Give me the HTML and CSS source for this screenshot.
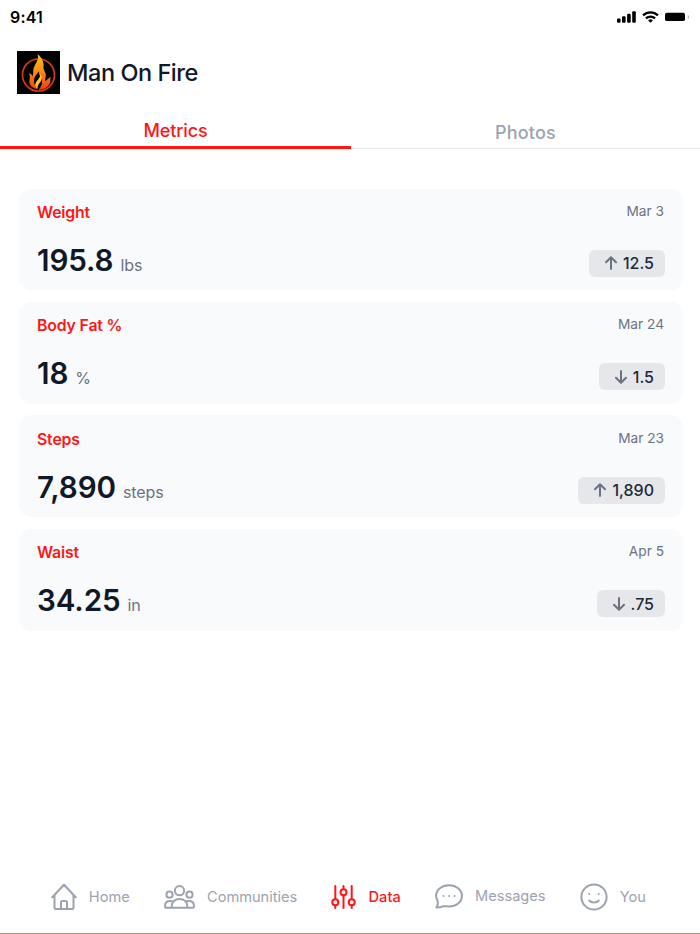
FILE: index.html
```html
<!DOCTYPE html>
<html lang="en">

<head>
  <meta charset="UTF-8" />
  <meta name="viewport" content="width=device-width, initial-scale=1.0" />
  <title>Man On Fire</title>
  <link rel="stylesheet" href="styles.css">
</head>

<body>
  <div class="status-bar">
    <span class="time">9:41</span>
    <div class="status-icons">
      <svg width="19" height="12" viewBox="0 0 19 12">
        <rect x="0" y="7.5" width="3.6" height="4.2" rx="1" />
        <rect x="5" y="5.3" width="3.6" height="6.4" rx="1" />
        <rect x="10.1" y="2.8" width="3.6" height="8.9" rx="1" />
        <rect x="15.2" y="0.2" width="3.6" height="11.5" rx="1" />
      </svg>
      <svg width="17" height="12" viewBox="0 0 17 12" fill="none" stroke="#000" stroke-width="2.2">
        <path d="M1 4.4a10.8 10.8 0 0 1 15 0" />
        <path d="M3.9 7.4a6.7 6.7 0 0 1 9.2 0" />
        <path d="M8.5 11.8 6.1 9.5a3.5 3.5 0 0 1 4.8 0z" fill="#000" stroke="none" />
      </svg>
      <svg width="24" height="10" viewBox="0 0 24 10">
        <rect x="0" y="0.7" width="20" height="8.4" rx="1.8" />
        <path d="M22.800 3v4c.8-.4 1.100-1.200 1.100-2s-.3-1.600-1.100-2z" fill="#aaa" />
      </svg>
    </div>
  </div>

  <header class="header">
    <svg class="logo" viewBox="0 0 43 43">
      <defs>
        <linearGradient id="flame" x1="0" y1="0" x2="0" y2="1">
          <stop offset="0" stop-color="#ffc21a" />
          <stop offset="0.5" stop-color="#fb8a16" />
          <stop offset="1" stop-color="#ee3c12" />
        </linearGradient>
      </defs>
      <rect width="43" height="43" />
      <circle cx="21.500" cy="24" r="16" fill="none" stroke="#d93a16" stroke-width="1.700" />
      <path fill="url(#flame)" d="M20.500 3c5 4 6.500 9 6 13-.4 3 2.500 5 2.300 9-.1 2-.8 3-.8 5 2-.5 2.500-2.500 6-4-1.500 3 .5 5-2.500 8.500-2.500 3-6 4-10 4.500 4-5 4.500-8 2.500-12-1.500-3-2.500-4-1.800-7-3 4-5.700 6.500-5.200 10.500.3 3 1.500 5 3 7.500-5-1-8.500-4.500-7.500-9 .4-2 .8-4-.5-6.500 2 .3 3.200 1.200 3.700 3 1.200-4.500-.5-6.500 2.300-11.500 2-3.500 4-6 2.500-11z" />
      <path fill="#ffc629" d="M23.500 23c3 6-.5 8-2 10.500-.8 1.500-1 2.500-.8 4.500-3-2-3-4.500-1.500-7 1.500-2.500 4-4 4.300-8z" />
    </svg>
    <h1>Man On Fire</h1>
  </header>

  <nav class="tabs">
    <a class="tab active">Metrics</a>
    <a class="tab">Photos</a>
  </nav>

  <main class="metrics">
    <section class="card">
      <div class="row">
        <h2>Weight</h2>
        <span class="date">Mar 3</span>
      </div>
      <div class="row">
        <p class="value">195.8<span class="unit">lbs</span></p>
        <div class="change"><svg class="arrow" viewBox="0 0 12 14"><path d="M6 13V1.500M1 6.300l5-5 5 5" /></svg>12.5</div>
      </div>
    </section>
    <section class="card">
      <div class="row">
        <h2>Body Fat %</h2>
        <span class="date">Mar 24</span>
      </div>
      <div class="row">
        <p class="value">18<span class="unit">%</span></p>
        <div class="change"><svg class="arrow" viewBox="0 0 12 14"><path d="M6 1v11.500M1 7.700l5 5 5-5" /></svg>1.5</div>
      </div>
    </section>
    <section class="card">
      <div class="row">
        <h2>Steps</h2>
        <span class="date">Mar 23</span>
      </div>
      <div class="row">
        <p class="value">7,890<span class="unit">steps</span></p>
        <div class="change"><svg class="arrow" viewBox="0 0 12 14"><path d="M6 13V1.500M1 6.300l5-5 5 5" /></svg>1,890</div>
      </div>
    </section>
    <section class="card">
      <div class="row">
        <h2>Waist</h2>
        <span class="date">Apr 5</span>
      </div>
      <div class="row">
        <p class="value">34.25<span class="unit">in</span></p>
        <div class="change"><svg class="arrow" viewBox="0 0 12 14"><path d="M6 1v11.500M1 7.700l5 5 5-5" /></svg>.75</div>
      </div>
    </section>
  </main>

  <nav class="bottom-nav">
    <a class="nav-item home">
      <svg width="26" height="28" viewBox="0 0 26 28">
        <path d="M1.300 14.300 13 1.800l11.700 12.500M3.500 12.500v12.300c0 .8.500 1.300 1.300 1.300h16.400c.8 0 1.300-.5 1.300-1.300V12.500M10 26v-6.500c0-1 .6-1.600 1.600-1.600h2.800c1 0 1.600.6 1.600 1.600V26" />
      </svg>
      <span>Home</span>
    </a>
    <a class="nav-item communities">
      <svg width="31" height="24" viewBox="0 0 31 24">
        <circle cx="15.500" cy="5.700" r="4.600" />
        <circle cx="5.500" cy="9.700" r="3.100" />
        <circle cx="25.500" cy="9.700" r="3.100" />
        <path d="M7.700 22.800v-1.500c0-4.500 3.200-7.300 7.800-7.300s7.800 2.800 7.800 7.300v1.500M9.500 16.700c-1-.5-2.200-.7-3.500-.7-3 0-4.900 1.700-4.900 4.500v1.300c0 .7.300 1 1 1h26.800c.7 0 1-.3 1-1v-1.300c0-2.800-1.900-4.500-4.900-4.500-1.300 0-2.500.2-3.500.7" />
      </svg>
      <span>Communities</span>
    </a>
    <a class="nav-item data active">
      <svg width="25" height="24" viewBox="0 0 25 24">
        <path d="M4.300 1v13M4.300 20.500V23M12.500 1v3M12.500 10.500V23M20.700 1v13M20.700 20.500V23" />
        <circle cx="4.300" cy="17.200" r="3" />
        <circle cx="12.500" cy="7.200" r="3" />
        <circle cx="20.700" cy="17.200" r="3" />
      </svg>
      <span>Data</span>
    </a>
    <a class="nav-item messages">
      <svg width="28" height="25" viewBox="0 0 28 25">
        <path d="M2.800 17.200C1.700 15.600 1.100 13.900 1.100 12 1.100 6 6.800 1.200 14 1.200S26.900 6 26.900 12 21.200 22.400 14 22.400c-2 0-3.900-.3-5.600-.2-2 .9-4.300 1.500-7 1.400 1.200-1.700 1.800-4.300 1.400-6.400z" />
        <path class="dots" d="M8.500 12h.01M14 12h.01M19.500 12h.01" />
      </svg>
      <span>Messages</span>
    </a>
    <a class="nav-item you">
      <svg width="28" height="28" viewBox="0 0 28 28">
        <circle cx="14" cy="14" r="12.600" />
        <path d="M9.200 17.500c2.300 2.700 7.300 2.700 9.600 0" />
        <path class="dots" d="M9.300 11h.01M18.700 11h.01" />
      </svg>
      <span>You</span>
    </a>
  </nav>
</body>

</html>
```
FILE: styles.css
```css
* {
  box-sizing: border-box;
}

body {
  font-family: Inter, sans-serif;
  height: 934px;
  margin: 0;
  background: #fff;
  color: #111827;
  display: flex;
  flex-direction: column;
  border-bottom: 1px solid #f87171;
}

h1,
h2,
p {
  margin: 0;
}

svg {
  display: block;
  flex: none;
}

.status-bar {
  height: 34px;
  padding: 0 11px 0 10px;
  display: flex;
  align-items: center;
  justify-content: space-between;
  color: #000;
}

.time {
  font-size: 16px;
  font-weight: 600;
  letter-spacing: .2px;
}

.status-icons {
  display: flex;
  align-items: center;
  gap: 6px;
}

.header {
  height: 78px;
  padding: 17px 17px 0;
  display: flex;
  gap: 7px;
}

.logo {
  width: 43px;
  height: 43px;
}

h1 {
  font-size: 23.5px;
  font-weight: 450;
  line-height: 43px;
  letter-spacing: -.45px;
}

.tabs {
  height: 37px;
  display: flex;
  border-bottom: 1px solid #e5e7eb;
}

.tab {
  width: 349px;
  height: 37px;
  padding-top: 3px;
  text-align: center;
  font-size: 18px;
  font-weight: 450;
  line-height: 36px;
  letter-spacing: .2px;
  color: #9ca3af;
}

.tab.active {
  width: 351px;
  padding-top: 1px;
  letter-spacing: -.1px;
  color: #ff1616;
  border-bottom: 3px solid #ff1616;
}

.metrics {
  padding: 39.700px 17px 0 19px;
  display: flex;
  flex-direction: column;
  gap: 11.700px;
}

.card {
  height: 101.700px;
  padding: 12.300px 19px 0 18px;
  border-radius: 12px;
  background: #f9fafc;
}

.row {
  display: flex;
  justify-content: space-between;
}

h2 {
  font-size: 15.800px;
  font-weight: 600;
  line-height: 24px;
  letter-spacing: -.15px;
  color: #ff1616;
}

.date {
  font-size: 13.700px;
  line-height: 21px;
  color: #6b7280;
}

.value {
  margin-top: 15px;
  font-size: 29.600px;
  font-weight: 600;
  line-height: 40px;
  letter-spacing: -.1px;
}

.unit {
  margin-left: 7px;
  font-size: 16px;
  font-weight: 400;
  color: #6b7280;
}

.change {
  height: 27px;
  margin: 25px -1px 0 0;
  padding: 0 11px 0 16px;
  display: flex;
  align-items: center;
  gap: 6px;
  border-radius: 6px;
  background: #e5e7eb;
  color: #1f2937;
  font-size: 16px;
  font-weight: 500;
}

.arrow {
  width: 12px;
  height: 14px;
  fill: none;
  stroke: #6b7280;
  stroke-width: 2;
  stroke-linecap: round;
  stroke-linejoin: round;
}

.bottom-nav {
  margin-top: auto;
  height: 73px;
  padding-left: 50.500px;
  display: flex;
  align-items: center;
}

.nav-item {
  display: flex;
  align-items: center;
  gap: 12.300px;
  color: #9ca3af;
  font-size: 14.600px;
}

.nav-item svg {
  fill: none;
  stroke: currentColor;
  stroke-width: 2;
  stroke-linecap: round;
  stroke-linejoin: round;
}

.nav-item.active {
  color: #ff1616;
  font-weight: 450;
}

.messages span {
  margin-bottom: 2px;
}

.communities,
.data,
.messages,
.you {
  margin-left: 34px;
}
```
